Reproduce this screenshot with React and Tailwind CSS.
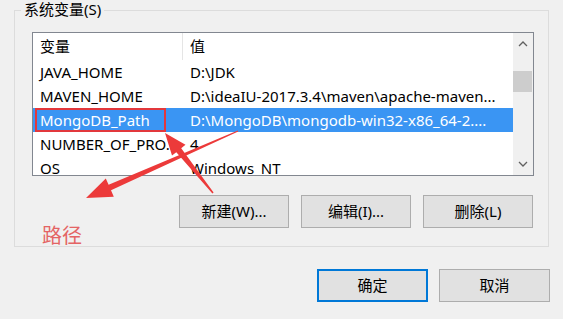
import React from "react";

const rows = [
  { name: "JAVA_HOME", value: "D:\\JDK" },
  { name: "MAVEN_HOME", value: "D:\\ideaIU-2017.3.4\\maven\\apache-maven..." },
  { name: "MongoDB_Path", value: "D:\\MongoDB\\mongodb-win32-x86_64-2....", selected: true },
  { name: "NUMBER_OF_PRO...", value: "4" },
  { name: "OS", value: "Windows_NT" },
];

const font = { fontFamily: '"Noto Sans", "Noto Sans CJK SC", sans-serif' };

function Chevron({ up }) {
  return (
    <svg width="10" height="6" viewBox="0 0 10 6">
      <path
        d={up ? "M1 5 L5 1 L9 5" : "M1 1 L5 5 L9 1"}
        fill="none"
        stroke="#606060"
        strokeWidth="1.3"
      />
    </svg>
  );
}

function Btn({ children, primary, narrow }) {
  return (
    <div
      className={
        "flex h-[33px] items-center justify-center bg-[#e1e1e1] text-[15px] text-black " +
        (narrow ? "w-[110px] " : "w-[111px] ") +
        (primary ? "border-2 border-[#0078d7]" : "border border-[#adadad]")
      }
    >
      {children}
    </div>
  );
}

export default function App() {
  return (
    <div
      className="relative h-[319px] w-[563px] overflow-hidden bg-[#f0f0f0] pt-[10px]"
      style={font}
    >
      {/* group box */}
      <div className="relative ml-[14px] h-[237px] w-[535px] border border-[#dcdcdc] pl-[17px] pt-[21px]">
        <div className="absolute left-[6px] top-[-11px] bg-[#f0f0f0] px-[3px] text-[15px] leading-[18px] text-black">
          系统变量(S)
        </div>
        {/* list */}
        <div className="flex h-[144px] w-[502px] border border-[#828790] bg-white">
          <div className="flex flex-1 flex-col overflow-hidden">
            <div className="flex h-[27px] shrink-0 items-center text-[15px] text-black">
              <div className="h-full w-[150px] border-r border-[#e5e5e5] pl-[7px] leading-[27px]">
                变量
              </div>
              <div className="pl-[7px]">值</div>
            </div>
            {rows.map((r) => (
              <div
                key={r.name}
                className={
                  "flex h-[24px] shrink-0 items-center whitespace-nowrap text-[15px] " +
                  (r.selected ? "bg-[#3a95f3] text-white" : "text-black")
                }
              >
                <div className="w-[150px] overflow-hidden pl-[7px]">{r.name}</div>
                <div className="flex-1 overflow-hidden pl-[7px]">{r.value}</div>
              </div>
            ))}
          </div>
          <div className="flex w-[20px] flex-col bg-[#f0f0f0]">
            <div className="flex h-[22px] items-center justify-center">
              <Chevron up />
            </div>
            <div className="flex-1">
              <div className="ml-0 mt-[16px] h-[21px] w-[19px] bg-[#cdcdcd]" />
            </div>
            <div className="flex h-[22px] items-center justify-center">
              <Chevron />
            </div>
          </div>
        </div>
        {/* buttons */}
        <div className="mt-[19px] flex w-[502px] justify-end gap-[12px] pr-[1px]">
          <Btn narrow>新建(W)...</Btn>
          <Btn narrow>编辑(I)...</Btn>
          <Btn narrow>删除(L)</Btn>
        </div>
        <div className="absolute left-[27px] top-[213px] text-[20px] leading-[24px] text-[#e46464]">
          路径
        </div>
      </div>

      {/* dialog buttons */}
      <div className="mt-[22px] flex justify-end gap-[11px] pr-[13px]">
        <Btn primary>确定</Btn>
        <Btn>取消</Btn>
      </div>

      {/* annotation overlay */}
      <svg
        className="pointer-events-none absolute left-0 top-0"
        width="563"
        height="319"
        viewBox="0 0 563 319"
      >
        <rect x="36" y="109" width="129" height="22" fill="none" stroke="#e2383c" strokeWidth="2" />
        <polygon
          points="238.2,131.5 111,190.2 113.8,196.7 86,198 105.8,178.4 108.6,184.8 237.8,130.5"
          fill="#ec3a3a"
        />
        <polygon
          points="213.6,192.5 181.2,148.2 185.5,144.8 165,133 172,155.6 176.3,152.2 212.4,193.5"
          fill="#ec3a3a"
        />
      </svg>
    </div>
  );
}
